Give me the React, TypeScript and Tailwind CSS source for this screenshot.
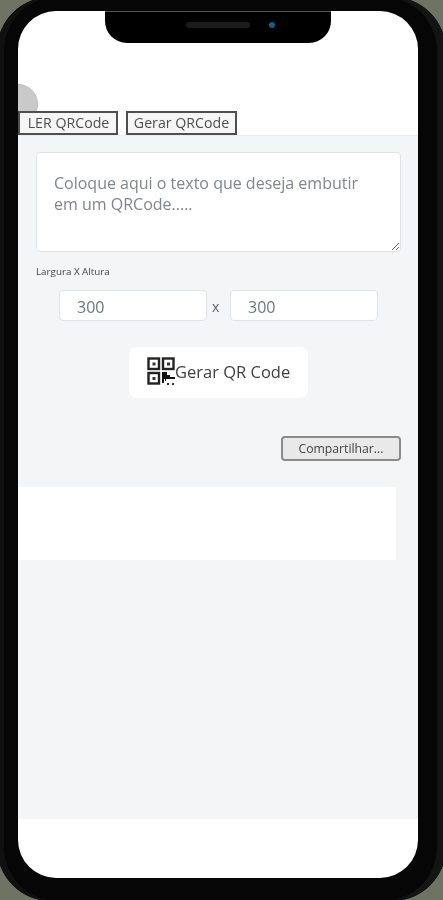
export default function App() {
  return (
    <div className="h-[900px] w-[443px] overflow-hidden bg-[#6f7364] font-['Open_Sans',sans-serif] blur-[0.5px]">
      <div className="-mt-[3px] -ml-[3px] h-[904px] w-[449px] rounded-[54px] bg-[#060606] pt-[14px] pl-[21px] pr-[28px] pb-[23px] shadow-[inset_7px_0_0_#101010,inset_-9px_0_0_#141414]">
        <div className="relative flex h-full flex-col overflow-hidden rounded-[38px] bg-white">
          <div className="absolute left-[87px] top-0 h-[32px] w-[226px] rounded-b-[22px] border-t border-[#555] bg-black">
            <div className="absolute left-[81px] top-[10px] h-[6px] w-[64px] rounded-full bg-[#1c1c1c]" />
            <div className="absolute left-[164px] top-[10px] h-[6px] w-[6px] rounded-full bg-[#0f5f8c]" />
          </div>
          <div className="absolute -left-[20px] top-[73px] h-[40px] w-[40px] rounded-full border border-[#bdbdbd] bg-[#c9c9c9]" />

          <div className="relative flex h-[124px] shrink-0 items-end gap-2">
            <button className="h-[24px] w-[100px] border-2 border-[#4f4f4f] bg-[#f6f6f6] pl-[1px] text-[14.2px] leading-none text-[#4f4f4f]">
              LER QRCode
            </button>
            <button className="h-[24px] w-[111px] border-2 border-[#4f4f4f] bg-[#f6f6f6] text-[14.2px] leading-none text-[#4f4f4f]">
              Gerar QRCode
            </button>
          </div>

          <div className="flex h-[684px] shrink-0 flex-col border-t border-[#ececec] bg-[#f3f5f7]">
            <textarea
              placeholder="Coloque aqui o texto que deseja embutir em um QRCode....."
              className="ml-[18px] mt-[16px] h-[100px] w-[365px] rounded border border-[#dfe3e7] bg-white px-[17px] py-[20px] text-[16px] leading-[21px] outline-none placeholder:text-[#7f868c]"
            />
            <div className="ml-[18px] mt-[13px] text-[9.8px] leading-[13px] text-[#444]">Largura X Altura</div>
            <div className="ml-[41px] mt-[12px] flex items-center gap-[5px]">
              <div className="flex h-[31px] w-[148px] items-center rounded border border-[#dfe3e7] bg-white pl-[17px] pt-[3px] text-[16px] text-[#6f767c]">
                300
              </div>
              <span className="w-[13px] pt-[2px] text-left text-[14px] text-[#5f666c]">x</span>
              <div className="flex h-[31px] w-[148px] items-center rounded border border-[#dfe3e7] bg-white pl-[17px] pt-[3px] text-[16px] text-[#6f767c]">
                300
              </div>
            </div>
            <div className="ml-[111px] mt-[26px] flex h-[51px] w-[179px] items-center rounded-lg bg-white pl-[18px] text-[16.5px] font-medium text-[#3f3f3f]">
              <svg width="28" height="28" viewBox="0 0 28 28" className="-mt-[3px] shrink-0">
                <g fill="none" stroke="#222" strokeWidth="2.4">
                  <rect x="1.5" y="1.5" width="10.5" height="10.5" />
                  <rect x="16" y="1.5" width="10.5" height="10.5" />
                  <rect x="1.5" y="16" width="10.5" height="10.5" />
                </g>
                <rect x="5.5" y="5.5" width="3" height="3" fill="#333" />
                <rect x="20" y="5.5" width="3" height="3" fill="#333" />
                <rect x="5.5" y="20" width="3" height="3" fill="#333" />
                <path d="M15 15h5v3h3v2h5v2h-9v2h-1v-2h-1v4h-2z" fill="#111" />
                <rect x="20" y="26" width="2" height="2" fill="#333" />
                <rect x="25" y="26" width="2" height="2" fill="#333" />
              </svg>
              <span>Gerar QR Code</span>
            </div>
            <div className="mt-[38px] flex justify-end pr-[17px]">
              <button className="h-[25px] w-[120px] rounded border-2 border-[#8a8a8a] bg-[#e9e9e9] pt-[2px] text-[12.2px] leading-none text-[#444]">
                Compartilhar...
              </button>
            </div>
            <div className="mt-[26px] h-[73px] w-[378px] bg-white" />
          </div>
        </div>
      </div>
    </div>
  );
}
